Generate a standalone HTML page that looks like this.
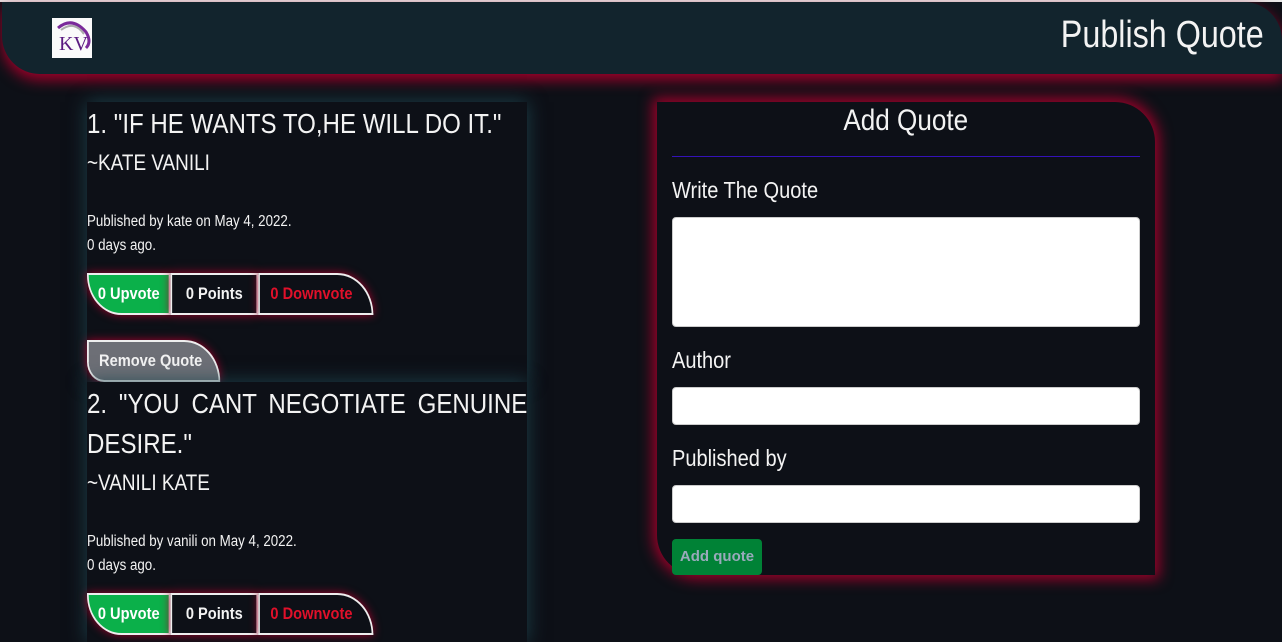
<!DOCTYPE html>
<html><head><meta charset="utf-8">
<style>
*{box-sizing:border-box;margin:0;padding:0}
body{width:1282px;height:638px;overflow:hidden;background:#0d1017;font-family:"Liberation Sans",sans-serif;color:#f3f3f3;position:relative}
.top{position:absolute;left:0;top:0;width:1282px;height:2px;background:#e8e8e8}
.hdr{position:absolute;left:2px;top:2px;width:1280px;height:72px;background:#12242d;border-radius:0 38px 0 38px;box-shadow:0 6px 14px #a0002a}
.logo{position:absolute;left:50px;top:16px;width:40px;height:40px;background:#fafafa}
.hdr h1{position:absolute;right:18px;top:12px;font-weight:normal;font-size:38px;transform:scaleX(.85);transform-origin:right center;white-space:nowrap}
.q{position:absolute;left:87px;width:440px;background:#0d1017;box-shadow:0 0 18px rgba(30,70,80,.9)}
.in2{position:absolute;left:0;top:0;width:512px;transform:scaleX(.86);transform-origin:0 0}
.in2>*{position:absolute;left:0}
.h{font-size:28px;line-height:40px;text-transform:uppercase;width:512px;white-space:nowrap}
.j{text-align:justify;text-align-last:justify;white-space:normal}
.a{font-size:22px;line-height:40px;white-space:nowrap}
.m{font-size:15.5px;line-height:24px;white-space:nowrap}
.btns{display:flex;height:42px}
.btns div{border:2px solid #eee;font-weight:bold;font-size:17px;line-height:38px;text-align:center;box-shadow:0 0 10px #a0002a}
.up{width:97px;background:#0bb04a;border-radius:0 0 0 40px;color:#fff}
.pt{width:102px;background:#0d1017}
.dn{width:134px;background:#0d1017;color:#e0102a;border-radius:0 42px 0 0;padding-right:10px}
.rm{width:155px;height:42px;background:#6d6f76;border:2px solid #eee;border-radius:0 42px 0 20px;font-weight:bold;font-size:17px;line-height:38px;padding-left:12px;box-shadow:0 0 10px #a0002a;white-space:nowrap}
.f{position:absolute;left:657px;top:102px;width:498px;height:473px;background:#0d1017;border-radius:0 40px 0 40px;box-shadow:0 0 14px 4px #a0002a}
.f>*{position:absolute;left:15px}
.f h3{font-weight:normal;text-align:center;font-size:30px;top:2px;width:468px}
.f h3 span{display:inline-block;transform:scaleX(.87)}
.f hr{border:0;border-top:1px solid #3412b8;top:54px;width:468px}
.lb{font-size:23px;transform:scaleX(.87);transform-origin:0 50%;white-space:nowrap}
.inp{background:#fff;border:1px solid #ccc;border-radius:4px;height:38px;width:468px}
.b{top:437px;width:90px;height:36px;background:#008236;border-radius:4px;color:#9ab;font-weight:bold;font-size:15px;line-height:36px;text-align:center}
</style></head><body>
<div class="top"></div>
<div class="hdr">
<div class="logo"><svg width="40" height="40" viewBox="0 0 40 40"><path d="M6 10 Q20 -2 34 14 Q40 24 34 30" stroke="#7a2a9a" stroke-width="3" fill="none"/><path d="M9 12 Q22 2 32 16" stroke="#aaa" stroke-width="2" fill="none"/><text x="7" y="32" font-family="Liberation Serif" font-size="20" fill="#5a1a80">KV</text></svg></div>
<h1>Publish Quote</h1></div>

<div class="q" style="top:102px;height:280px"><div class="in2">
<div class="h" style="top:2px">1. "IF HE WANTS TO,HE WILL DO IT."</div>
<div class="a" style="top:41px">~KATE VANILI</div>
<div class="m" style="top:108px">Published by kate on May 4, 2022.<br>0 days ago.</div>
<div class="btns" style="top:171px"><div class="up">0 Upvote</div><div class="pt">0 Points</div><div class="dn">0 Downvote</div></div>
<div class="rm" style="top:238px">Remove Quote</div>
</div></div>

<div class="q" style="top:382px;height:260px"><div class="in2">
<div class="h j" style="top:2px;height:40px;overflow:hidden">2. "YOU CANT NEGOTIATE GENUINE</div>
<div class="h" style="top:42px">DESIRE."</div>
<div class="a" style="top:81px">~VANILI KATE</div>
<div class="m" style="top:148px">Published by vanili on May 4, 2022.<br>0 days ago.</div>
<div class="btns" style="top:211px"><div class="up">0 Upvote</div><div class="pt">0 Points</div><div class="dn">0 Downvote</div></div>
</div></div>

<div class="f">
<h3><span>Add Quote</span></h3><hr>
<div class="lb" style="top:75px">Write The Quote</div>
<div class="inp" style="top:115px;height:110px"></div>
<div class="lb" style="top:245px">Author</div>
<div class="inp" style="top:285px"></div>
<div class="lb" style="top:343px">Published by</div>
<div class="inp" style="top:383px"></div>
<div class="b">Add quote</div>
</div>
</body></html>
